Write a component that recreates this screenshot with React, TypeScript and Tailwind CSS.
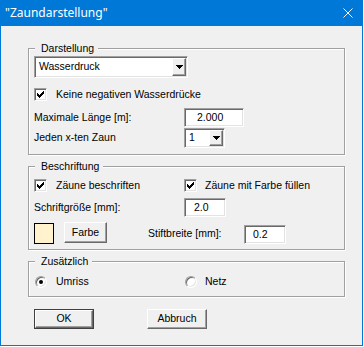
import React from 'react';

const sunken =
  'bg-white border border-t-[#a0a0a0] border-l-[#a0a0a0] border-r-white border-b-white shadow-[inset_1px_1px_0_#696969,inset_-1px_-1px_0_#e3e3e3]';
const raised =
  'bg-[#f0f0f0] border border-t-white border-l-white border-r-[#696969] border-b-[#696969] shadow-[inset_-1px_-1px_0_#a0a0a0]';

function Arrow() {
  return (
    <svg width="7" height="4" viewBox="0 0 7 4" shapeRendering="crispEdges">
      <path d="M0 0h7v1h-1v1h-1v1h-1v1h-1v-1h-1v-1h-1v-1h-1z" fill="#000" />
    </svg>
  );
}

function CheckBox({ checked }: { checked?: boolean }) {
  return (
    <div className={`${sunken} w-[13px] h-[13px] shrink-0 flex items-center justify-center`}>
      {checked && (
        <svg width="7" height="7" viewBox="0 0 7 7" shapeRendering="crispEdges">
          <path
            d="M6 0h1v1h-1z M5 1h2v1h-2z M0 2h1v1h-1z M4 2h3v1h-3z M0 3h2v1h-2z M3 3h3v1h-3z M0 4h5v1h-5z M1 5h3v1h-3z M2 6h1v1h-1z"
            fill="#000"
          />
        </svg>
      )}
    </div>
  );
}

function Radio({ checked }: { checked?: boolean }) {
  return (
    <div className="w-[12px] h-[12px] shrink-0 rounded-full bg-white border border-t-[#a0a0a0] border-l-[#a0a0a0] border-r-white border-b-white shadow-[inset_1px_1px_0_#696969,inset_-1px_-1px_0_#e3e3e3] flex items-center justify-center">
      {checked && <div className="w-[4px] h-[4px] rounded-full bg-black" />}
    </div>
  );
}

function Group({ title, className, children }: { title: string; className?: string; children: React.ReactNode }) {
  return (
    <div className={`relative border border-[#a0a0a0] shadow-[inset_1px_1px_0_#fff,1px_1px_0_#fff] ${className ?? ''}`}>
      <span className="absolute left-[6px] top-[-8px] pl-[6px] pr-[4px] bg-[#f0f0f0] leading-[14px]">{title}</span>
      {children}
    </div>
  );
}

export default function App() {
  return (
    <div className="w-[364px] h-[347px] bg-white">
      <div className="w-[363px] h-[346px] bg-[#0078d7] flex flex-col font-['Liberation_Sans',Arial,sans-serif] text-[10.5px] text-black">
        {/* Titelleiste */}
        <div className="h-[26px] shrink-0 flex items-center justify-between pl-[5px] pr-[10px] text-white text-[12px] font-['Noto_Sans',sans-serif]">
          <span>"Zaundarstellung"</span>
          <svg width="10" height="10" viewBox="0 0 10 10">
            <path d="M0.5 0.5L9.5 9.5M9.5 0.5L0.5 9.5" stroke="#fff" strokeWidth="1" />
          </svg>
        </div>

        {/* Inhalt */}
        <div className="flex-1 mx-px mb-px bg-[#f0f0f0] flex flex-col pl-[27px] pt-[22px]">
          <Group title="Darstellung" className="w-[317px]">
            <div className="flex flex-col pl-[5px] pt-[7px] pb-[6px]">
              <div className={`${sunken} w-[154px] h-[22px] flex items-center justify-between p-px`}>
                <span className="pl-[3px]">Wasserdruck</span>
                <div className={`${raised} w-[14px] h-[18px] flex items-center justify-center`}>
                  <Arrow />
                </div>
              </div>
              <div className="mt-[10px] h-[13px] flex items-center">
                <CheckBox checked />
                <span className="ml-[9px]">Keine negativen Wasserdrücke</span>
              </div>
              <div className="mt-[7px] flex items-center">
                <span className="w-[150px]">Maximale Länge [m]:</span>
                <div className={`${sunken} w-[60px] h-[19px] flex items-center pl-[12px]`}>2.000</div>
              </div>
              <div className="mt-px flex items-center">
                <span className="w-[150px]">Jeden x-ten Zaun</span>
                <div className={`${sunken} w-[41px] h-[20px] flex items-center justify-between p-px`}>
                  <span className="pl-[3px]">1</span>
                  <div className={`${raised} w-[14px] h-[16px] flex items-center justify-center`}>
                    <Arrow />
                  </div>
                </div>
              </div>
            </div>
          </Group>

          <Group title="Beschriftung" className="w-[317px] mt-[11px]">
            <div className="flex flex-col pl-[5px] pt-[12px] pb-[5px]">
              <div className="h-[13px] flex items-center">
                <div className="w-[150px] flex items-center">
                  <CheckBox checked />
                  <span className="ml-[9px]">Zäune beschriften</span>
                </div>
                <CheckBox checked />
                <span className="ml-[8px]">Zäune mit Farbe füllen</span>
              </div>
              <div className="mt-[6px] flex items-center">
                <span className="w-[150px]">Schriftgröße [mm]:</span>
                <div className={`${sunken} w-[42px] h-[19px] flex items-center pl-[9px]`}>2.0</div>
              </div>
              <div className="mt-[5px] h-[22px] flex items-start">
                <div className="mt-px w-[20px] h-[21px] border border-black bg-[#fff2cc]" />
                <div className={`${raised} ml-[10px] w-[43px] h-[21px] flex items-center justify-center`}>Farbe</div>
                <span className="ml-[41px] mt-[4px] w-[96px]">Stiftbreite [mm]:</span>
                <div className={`${sunken} mt-[3px] w-[42px] h-[19px] flex items-center pl-[8px]`}>0.2</div>
              </div>
            </div>
          </Group>

          <Group title="Zusätzlich" className="w-[317px] mt-[11px]">
            <div className="flex items-center h-[13px] pl-[6px] mt-[13px] mb-[8px]">
              <div className="w-[150px] flex items-center">
                <Radio checked />
                <span className="ml-[9px]">Umriss</span>
              </div>
              <Radio />
              <span className="ml-[8px]">Netz</span>
            </div>
          </Group>

          <div className="mt-[12px] flex items-center pl-[6px]">
            <div className="w-[60px] h-[20px] border border-[#404040] flex">
              <div className={`${raised} flex-1 flex items-center justify-center`}>OK</div>
            </div>
            <div className={`${raised} ml-[53px] w-[60px] h-[20px] flex items-center justify-center`}>Abbruch</div>
          </div>
        </div>
      </div>
    </div>
  );
}
